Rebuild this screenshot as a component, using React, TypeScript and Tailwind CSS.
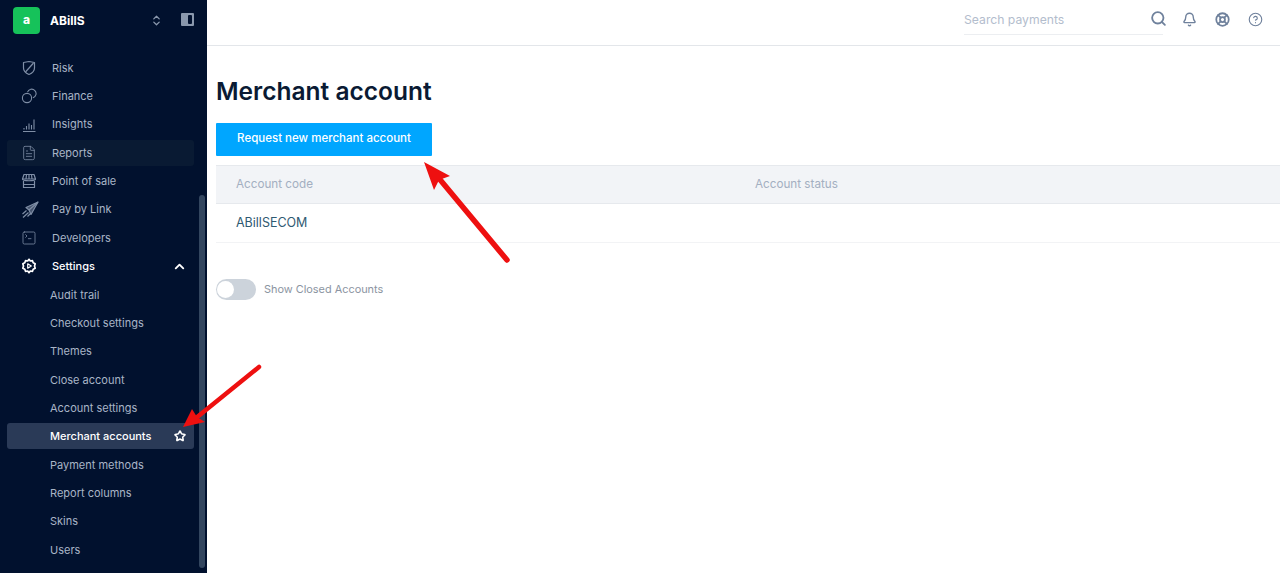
import { ChevronUp, ChevronsUpDown, Star, Search, Bell, CircleHelp, LifeBuoy, FileText, SquareTerminal } from 'lucide-react';
import type { ReactNode } from 'react';

const FONT = "font-['Inter','Noto_Sans',sans-serif]";

function ShieldIcon() {
  return (
    <svg width="16" height="16" viewBox="0 0 16 16" fill="none" stroke="currentColor" strokeWidth="1.2" strokeLinejoin="round">
      <path d="M2.500 2.500 8 1.500l5.500 1v5.500c0 3.200-2.500 5.300-5.500 6.500C5 13.300 2.500 11.200 2.500 8z" />
      <path d="M12.500 3 4.500 12" />
    </svg>
  );
}

function CoinsIcon() {
  return (
    <svg width="16" height="16" viewBox="0 0 16 16" fill="none" stroke="currentColor" strokeWidth="1.100">
      <circle cx="6" cy="10" r="4.600" />
      <path d="M6.500 4.200a4.400 4.400 0 1 1 5.400 5.600" />
    </svg>
  );
}

function BarsIcon() {
  return (
    <svg width="16" height="16" viewBox="0 0 16 16" fill="none" stroke="currentColor" strokeWidth="1.100">
      <path d="M2 14.500h12.500M3 12.500v-1.500M5.500 12.500V9M8 12.500V6.500M10.500 12.500V8M13 12.500V2.500" />
    </svg>
  );
}

function StoreIcon() {
  return (
    <svg width="16" height="16" viewBox="0 0 16 16" fill="none" stroke="currentColor" strokeWidth="1.200" strokeLinejoin="round">
      <path d="M3 1.500h10l1.500 4.500h-13zM5.500 1.500 5 6M8 1.500V6M10.500 1.500 11 6" />
      <path d="M1.500 6c0 2.300 13 2.300 13 0M2.500 8v6.500h11V8M2.500 11.500h11" />
    </svg>
  );
}

function PlaneIcon() {
  return (
    <svg width="18" height="18" viewBox="0 0 18 18" fill="none" stroke="currentColor" strokeWidth="1.200" strokeLinejoin="round">
      <path d="M17 1 5 6.500l3 2.500 2 4.500z" fill="currentColor" fillOpacity="0.550" />
      <path d="M17 1 8 9M5.500 9.500l-4 3.500M7.500 11.500l-5.500 5M9.500 12.500 6.500 15.500" />
    </svg>
  );
}

function GearIcon() {
  return (
    <svg width="16" height="16" viewBox="0 0 16 16" fill="none" stroke="currentColor" strokeWidth="1.700" strokeLinejoin="round">
      <path d="M8 1.300 9.300 3l2.200-.3.700 2.100 2 1-.7 2.200.7 2.200-2 1-.7 2.100-2.200-.3L8 14.700 6.700 13l-2.200.3-.7-2.100-2-1 .7-2.200-.7-2.200 2-1 .7-2.100L6.700 3z" />
      <path d="M6.700 5.800 10.300 8l-3.600 2.200z" strokeWidth="1.200" />
    </svg>
  );
}

function Item({ icon, label, active }: { icon: ReactNode; label: string; active?: boolean }) {
  return (
    <div className={`mb-[2.35px] flex h-[26px] items-center rounded-[3px] pl-[14px] pr-[8px] pt-[1px] ${active ? 'bg-[#091a33]' : ''}`}>
      <span className={`flex w-[31px] shrink-0 ${label === 'Settings' ? 'text-white' : 'text-[#7f8ea6]'}`}>{icon}</span>
      <span className={`text-[11px] ${label === 'Settings' ? 'font-medium text-white' : 'text-[#a9b5c7]'}`}>{label}</span>
      {label === 'Settings' && <ChevronUp size={15} strokeWidth={3} className="ml-auto mr-[-1px] text-white" />}
    </div>
  );
}

function SubItem({ label, active }: { label: string; active?: boolean }) {
  return (
    <div className={`mb-[2.35px] flex h-[26px] items-center rounded-[3px] pl-[43px] pr-[8px] pt-[1px] ${active ? 'bg-[#2a3a57]' : ''}`}>
      <span className={`text-[11px] ${active ? 'font-medium text-white' : 'text-[#a9b5c7]'}`}>{label}</span>
      {active && <Star size={12} strokeWidth={3.2} className="ml-auto text-white" />}
    </div>
  );
}

export default function App() {
  return (
    <div className={`${FONT} relative flex h-[573px] w-[1280px] overflow-hidden bg-white`}>
      <aside className="relative flex h-full w-[207px] shrink-0 flex-col bg-[#01112e]">
        <div className="flex h-[54.500px] shrink-0 items-start px-[13px] pt-[7px]">
          <div className="flex h-[27px] w-[27px] items-center justify-center rounded-[4px] bg-[#16c25a] pb-[2px] text-[12px] font-extrabold leading-none text-white">
            a
          </div>
          <span className="ml-[10px] mt-[5px] text-[12px] font-bold text-white">ABillS</span>
          <ChevronsUpDown size={13} strokeWidth={2.4} className="ml-[65px] mt-[7px] text-[#8a98ad]" />
          <div className="ml-[18px] mt-[6px] flex h-[13px] w-[13px] justify-end rounded-[1px] bg-[#8a98ad]">
            <div className="mr-[2px] mt-[2px] h-[9px] w-[4px] rounded-[1px] bg-[#01112e]" />
          </div>
        </div>
        <nav className="w-[194px] pl-[7px]">
          <Item icon={<ShieldIcon />} label="Risk" />
          <Item icon={<CoinsIcon />} label="Finance" />
          <Item icon={<BarsIcon />} label="Insights" />
          <Item icon={<FileText size={16} strokeWidth={1.200} />} label="Reports" active />
          <Item icon={<StoreIcon />} label="Point of sale" />
          <Item icon={<PlaneIcon />} label="Pay by Link" />
          <Item icon={<SquareTerminal size={16} strokeWidth={1.200} />} label="Developers" />
          <Item icon={<GearIcon />} label="Settings" />
          <SubItem label="Audit trail" />
          <SubItem label="Checkout settings" />
          <SubItem label="Themes" />
          <SubItem label="Close account" />
          <SubItem label="Account settings" />
          <SubItem label="Merchant accounts" active />
          <SubItem label="Payment methods" />
          <SubItem label="Report columns" />
          <SubItem label="Skins" />
          <SubItem label="Users" />
        </nav>
        <div className="absolute left-[199px] top-[195px] h-[373px] w-[6px] rounded-full bg-[#33465f]" />
      </aside>

      <main className="min-w-0 flex-1">
        <header className="flex h-[46px] items-start border-b border-[#e3e6ea] pl-[757px] pt-[4px]">
          <div className="h-[31px] w-[199px] border-b border-[#eceef1] pt-[7px] text-[12.200px] text-[#b3bdcd]">Search payments</div>
          <Search size={17} strokeWidth={2.600} className="ml-[-13px] mt-[6px] shrink-0 text-[#6f819c]" />
          <Bell size={15} strokeWidth={2.200} className="ml-[15px] mt-[8px] shrink-0 text-[#6f819c]" />
          <LifeBuoy size={15} strokeWidth={2.800} className="ml-[18px] mt-[8px] shrink-0 text-[#6f819c]" />
          <CircleHelp size={15} strokeWidth={1.800} className="ml-[18px] mt-[8px] shrink-0 text-[#6f819c]" />
        </header>
        <div className="pl-[9px] pt-[30px]">
          <h1 className="text-[24.500px] font-semibold leading-[30px] text-[#0a1a33]">Merchant account</h1>
          <button className="mt-[17px] flex h-[33px] w-[216px] items-center justify-center rounded-[1px] bg-[#00a6ff] pb-[2px] text-[11.500px] font-medium text-white">
            Request new merchant account
          </button>
          <div className="mt-[9px] grid h-[39px] grid-cols-[519px_1fr] items-center border-y border-[#e6e9ed] bg-[#f2f4f7] pl-[20px] pt-[1px] text-[11.700px] text-[#a3afc1]">
            <span>Account code</span>
            <span>Account status</span>
          </div>
          <div className="flex h-[39px] items-center border-b border-[#f2f3f5] pl-[20px] text-[12.500px] text-[#2f5a72]">ABillSECOM</div>
          <div className="mt-[36px] flex items-center">
            <div className="flex h-[21px] w-[40px] items-center rounded-full bg-[#ccd3db] pl-[1px]">
              <div className="h-[17px] w-[17px] rounded-full bg-white" />
            </div>
            <span className="ml-[8px] text-[10.900px] text-[#8b94a1]">Show Closed Accounts</span>
          </div>
        </div>
      </main>

      {/* annotation arrows */}
      <svg className="absolute left-0 top-0" width="1280" height="573" fill="none">
        <path d="M507 260 437 176" stroke="#ee1010" strokeWidth="5.500" strokeLinecap="round" />
        <path d="M424 162 450 176 439 180 434 190z" fill="#ee1010" />
        <path d="M259 367 196 418" stroke="#ee1010" strokeWidth="4.500" strokeLinecap="round" />
        <path d="M183 427 192 409 197 417 205 422z" fill="#ee1010" />
      </svg>
    </div>
  );
}
